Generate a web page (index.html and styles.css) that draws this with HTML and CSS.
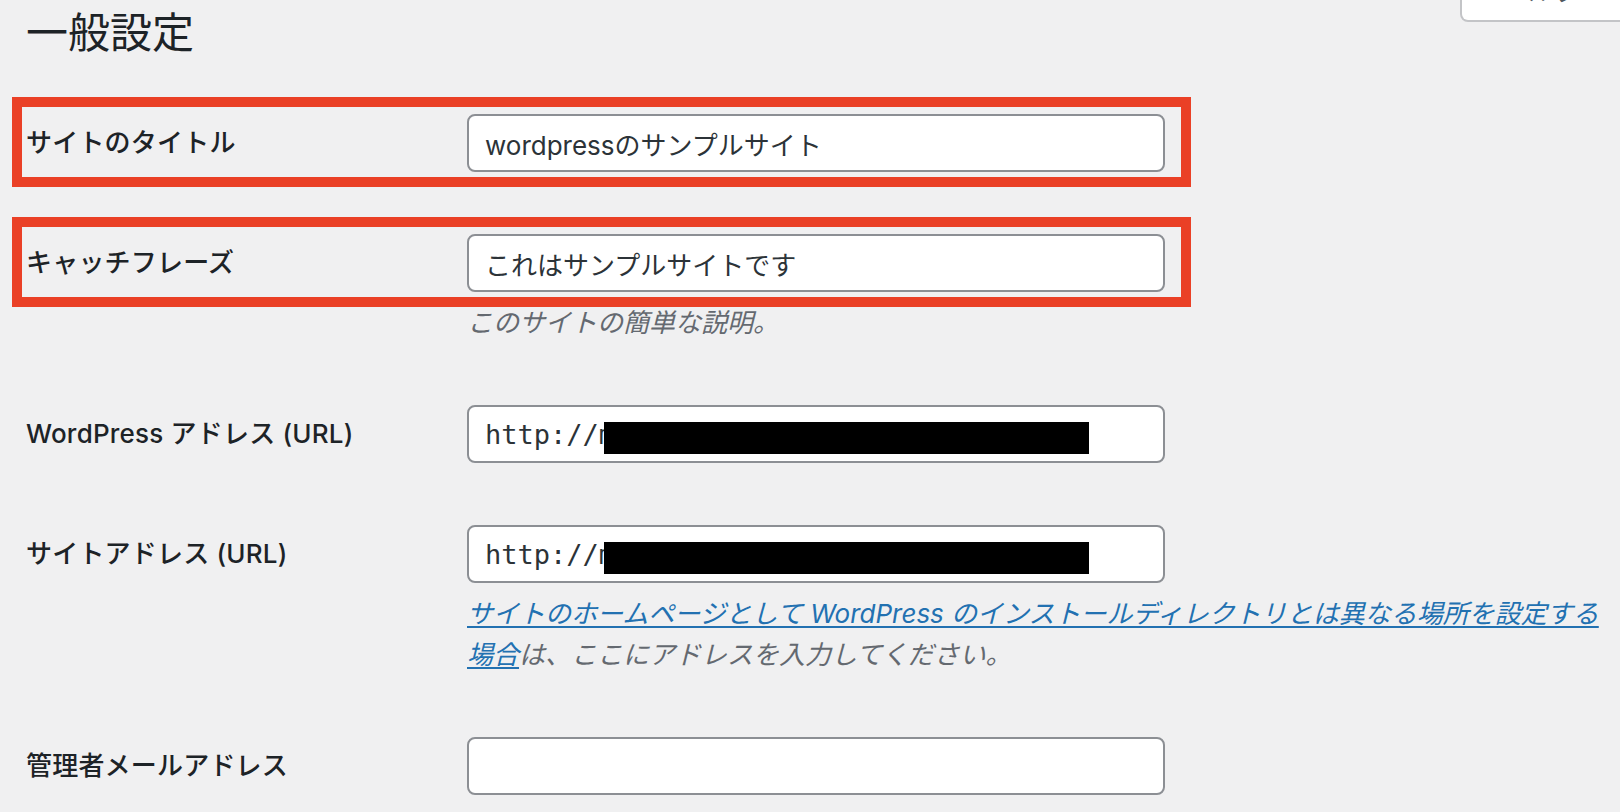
FILE: index.html
```html
<!DOCTYPE html>
<html lang="ja">

<head>
    <meta charset="UTF-8">
    <meta name="viewport" content="width=device-width, initial-scale=1.0">
    <title>一般設定</title>
    <link rel="stylesheet" href="styles.css">
</head>

<body>

    <div class="wrap">
        <div class="page-head">
            <h1>一般設定</h1>
            <button type="button" class="help-tab">ヘルプ</button>
        </div>

        <form class="settings" id="generalForm">
            <div class="row marked">
                <label class="row-label" for="blogname">サイトのタイトル</label>
                <div class="row-field">
                    <input type="text" id="blogname" class="regular-text" value="wordpressのサンプルサイト">
                </div>
            </div>

            <div class="row marked">
                <label class="row-label" for="blogdescription">キャッチフレーズ</label>
                <div class="row-field">
                    <input type="text" id="blogdescription" class="regular-text" value="これはサンプルサイトです">
                    <p class="description">このサイトの簡単な説明。</p>
                </div>
            </div>

            <div class="row">
                <label class="row-label" for="siteurl">WordPress アドレス (URL)</label>
                <div class="row-field">
                    <div class="field-box">
                        <input type="url" id="siteurl" class="regular-text code" value="http://mysite.sample-wp-demo.jp/wp">
                        <span class="redact"></span>
                    </div>
                </div>
            </div>

            <div class="row">
                <label class="row-label" for="home">サイトアドレス (URL)</label>
                <div class="row-field">
                    <div class="field-box">
                        <input type="url" id="home" class="regular-text code" value="http://mysite.sample-wp-demo.jp">
                        <span class="redact"></span>
                    </div>
                    <p class="description"><a href="#">サイトのホームページとして WordPress のインストールディレクトリとは異なる場所を設定する場合</a>は、ここにアドレスを入力してください。</p>
                </div>
            </div>

            <div class="row">
                <label class="row-label" for="new_admin_email">管理者メールアドレス</label>
                <div class="row-field">
                    <input type="email" id="new_admin_email" class="regular-text" value="">
                </div>
            </div>
        </form>
    </div>

</body>

</html>
```

FILE: styles.css
```css
html,
body {
    margin: 0;
    padding: 0;
    height: 100%;
    overflow: hidden;
}

body {
    background-color: #f0f0f1;
    color: #1d2327;
    font-family: Inter, "Noto Sans CJK JP", sans-serif;
    font-size: 26px;
}

.wrap {
    padding: 0;
}

.page-head {
    display: flex;
    justify-content: space-between;
    align-items: flex-start;
    padding-left: 26px;
    margin-bottom: 23px;
}

h1 {
    margin: 0;
    padding-top: 6px;
    font-size: 42px;
    font-weight: 400;
    line-height: 54px;
    color: #1d2327;
}

/* help tab hangs from the top edge, only its lower part shows */
.help-tab {
    margin-top: -36px;
    margin-right: -40px;
    width: 200px;
    height: 58px;
    padding: 0 0 0 40px;
    background-color: #fff;
    border: 2px solid #c3c4c7;
    border-top: none;
    border-radius: 0 0 8px 8px;
    color: #50575e;
    font-family: inherit;
    font-size: 26px;
    line-height: 54px;
    text-align: left;
    cursor: pointer;
}

.row {
    position: relative;
    display: grid;
    grid-template-columns: 441px 1fr;
    padding: 31px 8px 31px 26px;
}

/* red frame drawn round a highlighted row */
.row.marked::after {
    content: "";
    position: absolute;
    top: 14px;
    left: 12px;
    width: 1179px;
    height: 90px;
    border: 10px solid #ea4026;
    box-sizing: border-box;
    pointer-events: none;
}

.row-label {
    font-weight: 500;
    letter-spacing: 0.2px;
    line-height: 58px;
    color: #1d2327;
}

.row-field {
    min-width: 0;
}

input[type="text"],
input[type="url"],
input[type="email"] {
    display: block;
    width: 698px;
    height: 58px;
    margin: 0;
    padding: 0 16px;
    border: 2px solid #8c8f94;
    border-radius: 8px;
    box-sizing: border-box;
    background-color: #fff;
    color: #2c3338;
    font-family: inherit;
    font-size: 26px;
    outline: none;
}

input.code {
    font-family: "DejaVu Sans Mono", monospace;
    font-size: 27px;
    padding-left: 16px;
}

.field-box {
    position: relative;
    width: 698px;
}

/* black bar hiding the rest of the address */
.redact {
    position: absolute;
    top: 17px;
    left: 137px;
    width: 485px;
    height: 32px;
    background-color: #000;
}

.description {
    margin: 10px 0 0;
    font-style: italic;
    line-height: 41px;
    color: #646970;
}

.description a {
    color: #2271b1;
    text-decoration: underline;
    text-underline-offset: 3px;
}
```
